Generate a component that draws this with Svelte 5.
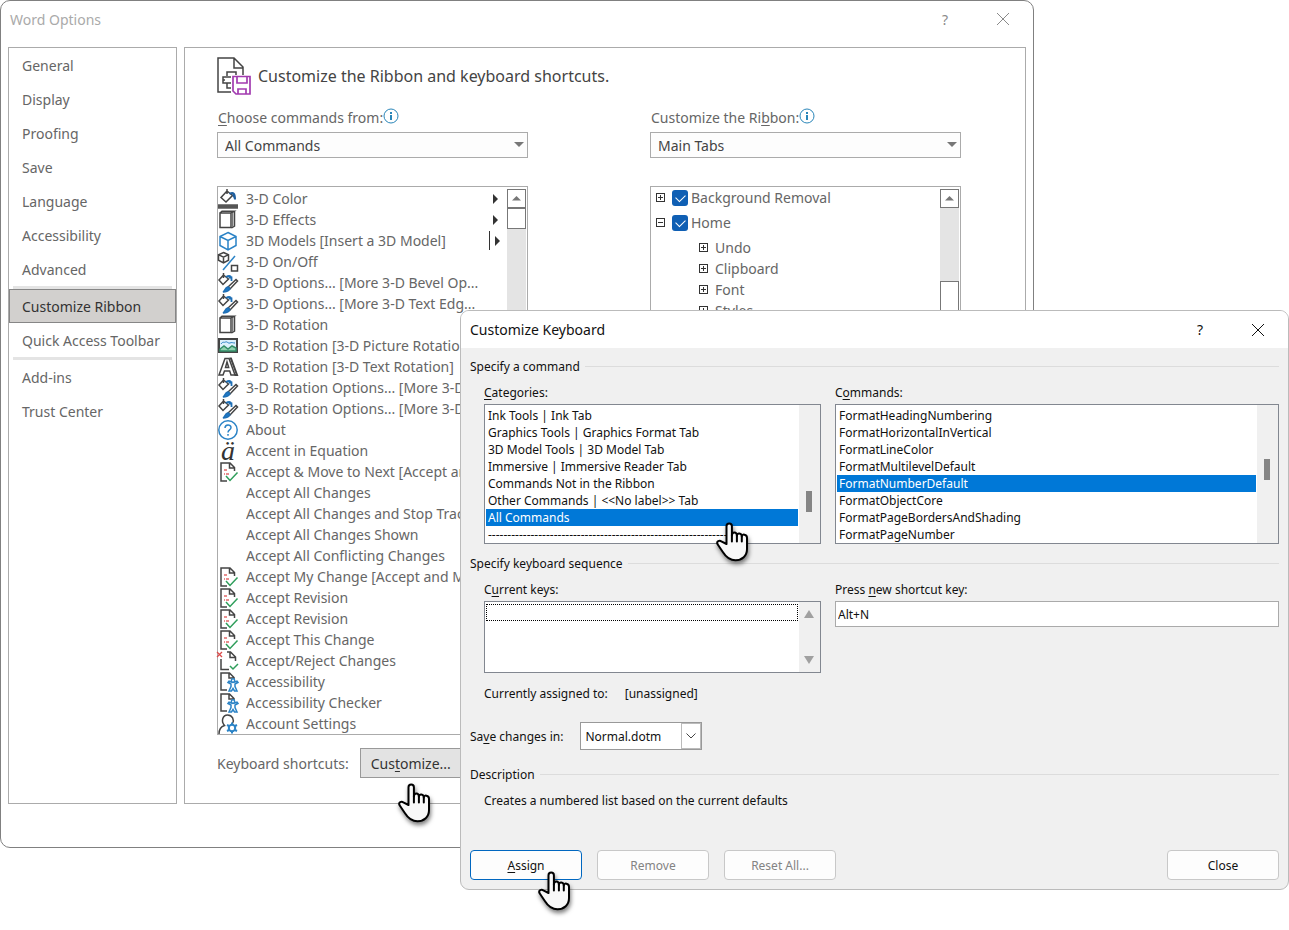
<script lang="ts">
	type Command = { label: string; icon?: string; more?: 'menu' | 'split' };

	const NAV = [
		['General', 'Display', 'Proofing', 'Save', 'Language', 'Accessibility', 'Advanced'],
		['Customize Ribbon', 'Quick Access Toolbar'],
		['Add-ins', 'Trust Center'],
	];

	const COMMANDS: Command[] = [
		{ label: '3-D Color', icon: 'fill', more: 'menu' },
		{ label: '3-D Effects', icon: 'slab', more: 'menu' },
		{ label: '3D Models [Insert a 3D Model]', icon: 'cube', more: 'split' },
		{ label: '3-D On/Off', icon: 'toggle' },
		{ label: '3-D Options... [More 3-D Bevel Op...', icon: 'brush' },
		{ label: '3-D Options... [More 3-D Text Edg...', icon: 'brush' },
		{ label: '3-D Rotation', icon: 'slab' },
		{ label: '3-D Rotation [3-D Picture Rotation]', icon: 'picture' },
		{ label: '3-D Rotation [3-D Text Rotation]', icon: 'letter' },
		{ label: '3-D Rotation Options... [More 3-D...', icon: 'brush' },
		{ label: '3-D Rotation Options... [More 3-D...', icon: 'brush' },
		{ label: 'About', icon: 'help' },
		{ label: 'Accent in Equation', icon: 'accent' },
		{ label: 'Accept & Move to Next [Accept an...', icon: 'accept' },
		{ label: 'Accept All Changes' },
		{ label: 'Accept All Changes and Stop Trac...' },
		{ label: 'Accept All Changes Shown' },
		{ label: 'Accept All Conflicting Changes' },
		{ label: 'Accept My Change [Accept and M...', icon: 'accept' },
		{ label: 'Accept Revision', icon: 'accept' },
		{ label: 'Accept Revision', icon: 'accept' },
		{ label: 'Accept This Change', icon: 'accept' },
		{ label: 'Accept/Reject Changes', icon: 'review' },
		{ label: 'Accessibility', icon: 'access' },
		{ label: 'Accessibility Checker', icon: 'access' },
		{ label: 'Account Settings', icon: 'account' },
	];

	const TABS = [
		{ label: 'Background Removal', open: false, groups: [] },
		{ label: 'Home', open: true, groups: ['Undo', 'Clipboard', 'Font', 'Styles'] },
	];

	const CATEGORIES = [
		'Ink Tools | Ink Tab',
		'Graphics Tools | Graphics Format Tab',
		'3D Model Tools | 3D Model Tab',
		'Immersive | Immersive Reader Tab',
		'Commands Not in the Ribbon',
		'Other Commands | <<No label>> Tab',
		'All Commands',
		'-'.repeat(62),
	];

	const WORD_COMMANDS = [
		'FormatHeadingNumbering',
		'FormatHorizontalInVertical',
		'FormatLineColor',
		'FormatMultilevelDefault',
		'FormatNumberDefault',
		'FormatObjectCore',
		'FormatPageBordersAndShading',
		'FormatPageNumber',
	];

	let page = $state('Customize Ribbon');
	let category = $state('All Commands');
	let command = $state('FormatNumberDefault');
	let shortcut = $state('Alt+N');
</script>

{#snippet pointer()}
	<svg class="pointer" viewBox="0 0 34 40" aria-hidden="true">
		<path
			d="M10.500 22V4.300a2.700 2.700 0 0 1 5.400 0V13.500c0-4 5-3.800 5 .3 0-3.400 4.900-3 4.900.8 0-3 5.200-2.600 5.200 1.200V27c0 7-5 11.200-11.500 11.200-6 0-9.500-3.200-12.500-8L1.600 22.300c-1.500-3.200 1.800-4.400 4.200-2.600z"
			fill="#f8f8f8" stroke="#000" stroke-width="2" stroke-linejoin="round"
		/>
		<path d="M15.900 13v6.500M20.900 13.500v6M25.800 14.500v5" stroke="#000" stroke-width="2" stroke-linecap="round" />
	</svg>
{/snippet}

{#snippet info()}
	<svg class="info" viewBox="0 0 16 16" fill="none" stroke="#2a86b9" aria-hidden="true">
		<circle cx="8" cy="8" r="7" />
		<path d="M8 4v2M8 7v5" stroke-width="2" />
	</svg>
{/snippet}

{#snippet icon(kind: string)}
	<svg class="icon" viewBox="0 0 20 20" fill="none" stroke="#444" stroke-width="1.500" aria-hidden="true">
		{#if kind === 'fill'}
			<path d="M9 0v5M9 2l5.500 4.500L8 13 3 8.500z" />
			<path d="M11.500 5c4-2.500 5.500 0 5.500 5.500M15 5l2 5" stroke="#1f5f9f" stroke-width="2" />
			<path d="M0 17.500h20" stroke="#555" stroke-width="4.500" />
		{:else if kind === 'slab'}
			<path d="M2 3h11v14.500H2zM2 3l2-1.800h12L13 3M16.500 1.500v14.500l-3 2" />
			<path d="M14.500 3v14" stroke="#777" stroke-width="1.500" />
		{:else if kind === 'cube'}
			<path d="M10 1.500l8 4v9l-8 4.500-8-4.500v-9zM2 5.500l8 4 8-4M10 9.500V19" stroke="#2b83c6" />
		{:else if kind === 'toggle'}
			<path d="M5.500.500l5 2.200v5.500l-5 2.600-5-2.600V2.700zM.500 2.700l5 2.500 5-2.500M5.500 5v5.500" />
			<path d="M17 4L5 18" stroke="#2b83c6" />
			<path d="M13.500 13.500h6v5.500h-6z" />
		{:else if kind === 'brush'}
			<path d="M5.500 0v5M5.500 2l5 4L5 11.500 1 7z" />
			<path d="M8 4c3-2 5.500-1.500 5.500 2.500M10.500 4.500h3V8" stroke="#1f6fb5" stroke-width="1.800" />
			<path d="M10 14l8-7.500 1.500 1.500L12 16z" fill="#fff" />
			<path d="M5 19c2-1 2-5 5-5 3.500 1 1.500 5-5 5z" fill="#1f78c4" stroke="#1f6fb5" />
		{:else if kind === 'picture'}
			<path d="M1 3h18v13H1z" fill="#dcf0fb" stroke-width="2" />
			<path d="M2 15v-2l4-3 4 3 4-3 4 2v3z" fill="#8fd0b0" stroke="#338d68" />
			<path d="M3 8c2-3 3-1 4.500-2s3 2 4.500 1 3 0 5 0" stroke="#2b83c6" stroke-width="1" />
		{:else if kind === 'letter'}
			<path d="M1 18L7 1.500h4L17 18h-4l-1.300-4H6.500L5 18zM7.500 10.500h3.200L9 5z" fill="#fff" />
			<path d="M11.500 1.500h1.500L19 18h-2.500" stroke-width="2" />
		{:else if kind === 'help'}
			<circle cx="10" cy="10" r="9.200" stroke="#2b83c6" />
			<path d="M7 8c0-4 6-4 6-.500 0 2.500-3 2.300-3 5M10 14v1.800" stroke="#2b83c6" stroke-width="1.500" />
		{:else if kind === 'accept'}
			<path d="M16.500 9V5.500L12 1H3v18h6M11.500 1v5h5" />
			<path d="M6 8h3M8 12h3M6 12h1" stroke="#e26a6a" stroke-width="1.500" />
			<path d="M8 14l4 4.500 7.500-8" stroke="#2f9e5b" stroke-width="1.500" />
		{:else if kind === 'review'}
			<path d="M17.500 10V6l-5-5H9M3 8v10.500h8M12 1v5.500h5.500" />
			<path d="M-1 1l5 5M4 1l-5 5" stroke="#dc4b4b" stroke-width="1.300" />
			<path d="M12 15l3 3 5-5" stroke="#2f9e5b" stroke-width="1.500" />
		{:else if kind === 'access'}
			<path d="M16 7V5.500L11.500 1H3v17h6M11 1v5h5" />
			<g stroke="#2b83c6" fill="#fff">
				<path d="M10 10.500l3 1.500v2.500L11 19h2.500l1.500-2.500 1.500 2.500H19l-2-4.500V12l3-1.500-1-1.300-4 1.300-4-1.300z" />
				<circle cx="15" cy="8.500" r="1.700" />
			</g>
		{:else if kind === 'account'}
			<path d="M1 20c0-5 2-7.500 5.500-8.500C2.500 7 5 1 9.500 1c5 0 7 5 5 8.500" />
			<circle cx="14" cy="14" r="3.200" stroke="#2b83c6" stroke-width="2" />
			<path d="M14 8.500v2M14 17.500v2M9 11l2 1M17 16l2 1M9 17l2-1M17 12l2-1" stroke="#2b83c6" stroke-width="2" />
		{/if}
	</svg>
{/snippet}

{#snippet expander(open: boolean)}
	<button class="expander" aria-label={open ? 'Collapse' : 'Expand'}>
		<svg viewBox="0 0 9 9" fill="none" stroke="#333" shape-rendering="crispEdges">
			<path d={open ? 'M.5.5h8v8h-8zM2 4.5h5' : 'M.5.5h8v8h-8zM2 4.5h5M4.5 2v5'} />
		</svg>
	</button>
{/snippet}

<main class="desktop">
	<section class="options" aria-label="Word Options">
		<header class="options-title">
			<span class="name">Word Options</span>
			<button aria-label="Help">?</button>
			<button aria-label="Close">
				<svg viewBox="0 0 12 12" stroke="currentColor"><path d="M0 0l12 12M12 0L0 12" /></svg>
			</button>
		</header>

		<div class="options-body">
			<nav>
				{#each NAV as group}
					<div class="nav-group">
						{#each group as item}
							<button class:active={page === item} onclick={() => (page = item)}>{item}</button>
						{/each}
					</div>
				{/each}
			</nav>

			<div class="panel">
				<h1>
					<svg viewBox="0 0 34 38" fill="none" stroke="#444" stroke-width="1.500" aria-hidden="true">
						<path d="M14 35H1V1h16l9 9v8M17 1v10h9" />
						<path d="M10 19v-4h9v3M14 20H6v6h8M10 26v5h4M6 23h2" />
						<path d="M16 19.500h17v17.500H19l-3-3zM20 20v6h10v-6M21 37v-5h8v5" stroke="#a23bb0" stroke-width="1.700" fill="#fff" />
					</svg>
					Customize the Ribbon and keyboard shortcuts.
				</h1>

				<div class="columns">
					<div class="column">
						<label for="source"><span><u>C</u>hoose commands from:</span>{@render info()}</label>
						<div class="dropdown">
							<select id="source"><option>All Commands</option></select>
							<svg viewBox="0 0 10 5" aria-hidden="true"><path d="M0 0h10L5 5z" /></svg>
						</div>
						<div class="box">
							<ul class="commands">
								{#each COMMANDS as item}
									<li>
										<span class="slot">
											{#if item.icon === 'accent'}
												<i class="accent">ä</i>
											{:else if item.icon}
												{@render icon(item.icon)}
											{/if}
										</span>
										<span class="text">{item.label}</span>
										{#if item.more}
											<span class="more" class:split={item.more === 'split'}></span>
										{/if}
									</li>
								{/each}
							</ul>
							<div class="scrollbar">
								<button aria-label="Scroll up"><svg viewBox="0 0 10 5"><path d="M0 5h10L5 0z" /></svg></button>
								<div class="thumb"></div>
							</div>
						</div>
					</div>

					<div class="column">
						<label for="tabs"><span>Customize the Ri<u>b</u>bon:</span>{@render info()}</label>
						<div class="dropdown">
							<select id="tabs"><option>Main Tabs</option></select>
							<svg viewBox="0 0 10 5" aria-hidden="true"><path d="M0 0h10L5 5z" /></svg>
						</div>
						<div class="box">
							<ul class="tree">
								{#each TABS as tab}
									<li>
										<div class="tab">
											{@render expander(tab.open)}
											<label><input type="checkbox" checked />{tab.label}</label>
										</div>
										{#if tab.open}
											<ul>
												{#each tab.groups as group}
													<li class="group">{@render expander(false)}{group}</li>
												{/each}
											</ul>
										{/if}
									</li>
								{/each}
							</ul>
							<div class="scrollbar lower">
								<button aria-label="Scroll up"><svg viewBox="0 0 10 5"><path d="M0 5h10L5 0z" /></svg></button>
								<div class="thumb"></div>
							</div>
						</div>
					</div>
				</div>

				<div class="shortcuts">
					<span>Keyboard shortcuts:</span>
					<button>Cus<u>t</u>omize...{@render pointer()}</button>
				</div>
			</div>
		</div>
	</section>

	<section class="keyboard" role="dialog" aria-label="Customize Keyboard">
		<header class="keyboard-title">
			<span class="name">Customize Keyboard</span>
			<button aria-label="Help">?</button>
			<button aria-label="Close">
				<svg viewBox="0 0 12 12" stroke="currentColor"><path d="M0 0l12 12M12 0L0 12" /></svg>
			</button>
		</header>

		<div class="keyboard-body">
			<h2>Specify a command</h2>
			<div class="fields">
				<div class="field">
					<span class="caption" id="categories"><u>C</u>ategories:</span>
					<div class="listbox">
						<ul role="listbox" aria-labelledby="categories" tabindex="0">
							{#each CATEGORIES as item}
								<li role="option" aria-selected={category === item}>{item}</li>
							{/each}
						</ul>
						<div class="rail low"><div></div></div>
						<div class="over-list">{@render pointer()}</div>
					</div>
				</div>
				<div class="field">
					<span class="caption" id="commands">C<u>o</u>mmands:</span>
					<div class="listbox">
						<ul role="listbox" aria-labelledby="commands" tabindex="0">
							{#each WORD_COMMANDS as item}
								<li role="option" aria-selected={command === item}>{item}</li>
							{/each}
						</ul>
						<div class="rail"><div></div></div>
					</div>
				</div>
			</div>

			<h2>Specify keyboard sequence</h2>
			<div class="fields">
				<div class="field">
					<span class="caption" id="current">C<u>u</u>rrent keys:</span>
					<div class="listbox">
						<ul class="empty" role="listbox" aria-labelledby="current" tabindex="0">
							<li class="focus" role="option" aria-selected="false" aria-label="None"></li>
						</ul>
						<div class="rail arrows">
							<svg viewBox="0 0 10 8"><path d="M0 8h10L5 0z" /></svg>
							<svg viewBox="0 0 10 8"><path d="M0 0h10L5 8z" /></svg>
						</div>
					</div>
				</div>
				<div class="field">
					<label class="caption" for="shortcut">Press <u>n</u>ew shortcut key:</label>
					<input id="shortcut" type="text" bind:value={shortcut} />
				</div>
			</div>

			<p class="assigned"><span>Currently assigned to:</span><span>[unassigned]</span></p>

			<div class="save">
				<label for="save">Sa<u>v</u>e changes in:</label>
				<div class="combo">
					<select id="save"><option>Normal.dotm</option></select>
					<span class="drop">
						<svg viewBox="0 0 10 6" fill="none" stroke="#444" aria-hidden="true"><path d="M.5.5L5 5 9.500.500" /></svg>
					</span>
				</div>
			</div>

			<h2>Description</h2>
			<p class="description">Creates a numbered list based on the current defaults</p>

			<footer>
				<button class="primary"><span><u>A</u>ssign</span>{@render pointer()}</button>
				<button disabled>Remove</button>
				<button disabled>Reset All...</button>
				<button class="close">Close</button>
			</footer>
		</div>
	</section>
</main>

<style>
	:global(body) {
		background: #fff;
	}

	.desktop {
		display: grid;
		min-height: 100vh;
		align-items: start;
		box-sizing: border-box;
		font-family: 'Noto Sans', 'Open Sans', sans-serif;
		font-size: 14px;
		color: #666;
	}

	.desktop :global(*) {
		box-sizing: border-box;
	}

	button,
	input,
	select {
		font: inherit;
		color: inherit;
		margin: 0;
	}

	button {
		padding: 0;
		border: none;
		background: none;
	}

	ul {
		list-style: none;
		margin: 0;
		padding: 0;
	}

	u {
		text-underline-offset: 2px;
	}

	/* the two windows share one grid cell, the dialog lies on top */
	.options,
	.keyboard {
		grid-area: 1 / 1;
	}

	.options {
		margin-right: 255px;
		padding: 0 7px 43px;
		border: 1px solid #808080;
		border-radius: 10px;
		background: #fff;
	}

	.options-title,
	.keyboard-title {
		display: flex;
		align-items: center;
	}

	.options-title {
		height: 46px;
		padding: 0 0 10px 2px;
		color: #8a8a8a;
	}

	.options-title .name {
		color: #aaa;
	}

	.name {
		flex: 1;
	}

	.options-title button,
	.keyboard-title button {
		display: grid;
		place-items: center;
		width: 58px;
	}

	.options-title svg,
	.keyboard-title svg {
		width: 12px;
		height: 12px;
	}

	.options-title button:last-child {
		margin-right: -6px;
	}

	.options-body {
		display: grid;
		grid-template-columns: 169px 1fr;
		gap: 7px;
	}

	nav,
	.panel {
		border: 1px solid #ababab;
	}

	.nav-group + .nav-group::before {
		content: '';
		display: block;
		height: 3px;
		margin: 0 4px;
		background: #e4e4e4;
	}

	nav button {
		display: block;
		width: 100%;
		height: 34px;
		padding: 0 12px;
		border: 1px solid transparent;
		text-align: left;
		white-space: nowrap;
	}

	nav button.active {
		border-color: #868686;
		background: #d2d0ce;
		color: #333;
	}

	.panel {
		padding: 9px 64px 25px 32px;
	}

	h1 {
		display: flex;
		align-items: center;
		gap: 7px;
		height: 38px;
		margin: 0;
		font-size: 16px;
		font-weight: 400;
		color: #444;
		white-space: nowrap;
	}

	h1 svg {
		width: 34px;
		height: 38px;
	}

	.columns {
		display: grid;
		grid-template-columns: 1fr 1fr;
		gap: 122px;
		margin-top: 13px;
	}

	.column {
		display: flex;
		flex-direction: column;
		min-width: 0;
	}

	.column > label {
		display: flex;
		height: 24px;
		padding-left: 1px;
		line-height: 20px;
		white-space: nowrap;
	}

	.info {
		width: 16px;
		height: 16px;
	}

	.dropdown {
		position: relative;
		margin-bottom: 28px;
	}

	.dropdown select {
		display: block;
		width: 100%;
		height: 26px;
		padding: 0 7px;
		border: 1px solid #ababab;
		border-radius: 0;
		background: #fdfdfd;
		color: #444;
		appearance: none;
	}

	.dropdown svg {
		position: absolute;
		top: 10px;
		right: 4px;
		width: 10px;
		fill: #777;
	}

	.box {
		display: flex;
		flex: 1;
		border: 1px solid #ababab;
	}

	.commands,
	.tree {
		flex: 1;
		min-width: 0;
	}

	.commands {
		padding-top: 1px;
	}

	.commands li {
		display: flex;
		align-items: center;
		height: 21px;
		padding-right: 9px;
	}

	.slot {
		display: grid;
		place-items: center;
		width: 20px;
		height: 21px;
		margin-right: 8px;
	}

	.icon {
		width: 20px;
		height: 20px;
		overflow: visible;
	}

	.accent {
		font: italic 28px/21px 'Liberation Serif', serif;
		color: #333;
	}

	.text {
		flex: 1;
		min-width: 0;
		overflow: hidden;
		white-space: nowrap;
		line-height: 21px;
	}

	.more::before {
		content: '';
		display: block;
		border: 5px solid transparent;
		border-left-color: #333;
		border-right: none;
	}

	.more.split {
		display: grid;
		align-items: center;
		height: 19px;
		margin-right: -2px;
		padding-left: 5px;
		border-left: 1px solid #333;
	}

	.scrollbar {
		width: 19px;
		margin: 2px 1px 0 0;
		background: #e4e4e4;
	}

	.scrollbar button {
		display: grid;
		place-items: center;
		width: 100%;
		height: 19px;
		border: 1px solid #777;
		background: #fff;
	}

	.scrollbar svg {
		width: 9px;
		fill: #777;
	}

	.thumb {
		height: 21px;
		border: 1px solid #777;
		background: #fff;
	}

	.lower .thumb {
		height: 170px;
		margin-top: 73px;
	}

	.tab {
		display: flex;
		align-items: center;
		height: 21px;
		padding-left: 5px;
	}

	li + li > .tab {
		margin: 4px 0;
	}

	.tab label {
		display: flex;
		align-items: center;
		gap: 3px;
		margin-left: 7px;
	}

	.tab input {
		display: grid;
		place-items: center;
		width: 16px;
		height: 16px;
		border-radius: 3px;
		background: #0f5fb4;
		appearance: none;
	}

	.tab input:checked::before {
		content: '';
		width: 8px;
		height: 5px;
		margin-bottom: 2px;
		border: solid #fff;
		border-width: 0 0 1px 1px;
		transform: rotate(-45deg);
	}

	.expander {
		display: flex;
		width: 9px;
		height: 9px;
	}

	.expander svg {
		width: 9px;
		height: 9px;
	}

	.group {
		display: flex;
		align-items: center;
		gap: 7px;
		height: 21px;
		padding-left: 48px;
	}

	.shortcuts {
		display: flex;
		align-items: center;
		gap: 11px;
		margin-top: 13px;
		white-space: nowrap;
	}

	.shortcuts button {
		position: relative;
		height: 30px;
		padding: 0 10px;
		border: 1px solid #999;
		background: #e3e3e3;
		color: #333;
	}

	.pointer {
		position: absolute;
		z-index: 1;
		width: 34px;
		height: 40px;
		filter: drop-shadow(1px 3px 2px rgb(0 0 0 / 50%));
		pointer-events: none;
	}

	.shortcuts .pointer {
		top: 34px;
		left: 37px;
	}

	.keyboard {
		z-index: 1;
		margin: 310px 0 0 460px;
		border: 1px solid #bbb;
		border-radius: 9px;
		background: #f0f0f0;
		color: #111;
		font-size: 12px;
	}

	.keyboard-title {
		height: 37px;
		padding: 0 1px 0 9px;
		border-radius: 8px 8px 0 0;
		background: #fff;
		font-size: 14px;
	}

	.keyboard-body {
		padding: 8px 9px 9px;
	}

	h2 {
		display: flex;
		align-items: center;
		gap: 5px;
		height: 20px;
		margin: 0;
		font-size: 12px;
		font-weight: 400;
	}

	h2::after {
		content: '';
		flex: 1;
		height: 1px;
		background: #dcdcdc;
	}

	.fields {
		display: grid;
		grid-template-columns: 337fr 444fr;
		gap: 14px;
		padding-left: 14px;
	}

	.fields + h2 {
		margin-top: 9px;
	}

	.field {
		min-width: 0;
	}

	.caption {
		display: block;
		height: 28px;
		line-height: 33px;
	}

	.listbox {
		position: relative;
		display: flex;
		border: 1px solid #828790;
		background: #fff;
	}

	.listbox ul {
		flex: 1;
		min-width: 0;
		padding: 2px 1px 0;
		outline: none;
	}

	.listbox li {
		height: 17px;
		padding: 0 2px;
		overflow: hidden;
		line-height: 17px;
		white-space: nowrap;
	}

	.listbox li[aria-selected='true'] {
		background: #0078d7;
		color: #fff;
	}

	.listbox .empty {
		height: 70px;
	}

	.listbox .focus {
		border: 1px dotted #000;
	}

	.over-list {
		position: absolute;
		right: 104px;
		bottom: 21px;
	}

	.rail {
		width: 21px;
		padding: 54px 8px 0 7px;
		background: #f0f0f0;
	}

	.rail.low {
		padding-top: 86px;
	}

	.rail div {
		width: 6px;
		height: 21px;
		background: #858585;
	}

	.rail.arrows {
		display: flex;
		flex-direction: column;
		justify-content: space-between;
		padding: 8px 6px 8px 5px;
	}

	.arrows svg {
		width: 10px;
		height: 8px;
		fill: #a0a0a0;
	}

	.field input {
		display: block;
		width: 100%;
		height: 26px;
		padding: 0 2px;
		border: 1px solid #aaa;
		border-radius: 0;
		background: #fff;
	}

	p {
		margin: 0;
		padding-left: 14px;
		line-height: 20px;
	}

	.assigned {
		display: flex;
		gap: 17px;
		margin-top: 11px;
	}

	.save {
		display: flex;
		align-items: center;
		gap: 17px;
		margin: 18px 0 14px;
	}

	.combo {
		position: relative;
		display: flex;
		width: 122px;
	}

	.combo select {
		width: 100%;
		height: 28px;
		padding: 0 4px;
		border: 1px solid #999;
		border-radius: 0;
		background: #fff;
		appearance: none;
	}

	.drop {
		position: absolute;
		top: 1px;
		right: 1px;
		display: grid;
		place-items: center;
		width: 20px;
		height: 26px;
		border: 1px solid #bbb;
		pointer-events: none;
	}

	.drop svg {
		width: 10px;
		height: 6px;
	}

	.description {
		margin-top: 7px;
	}

	footer {
		display: flex;
		gap: 15px;
		margin-top: 39px;
	}

	footer button {
		position: relative;
		width: 112px;
		height: 30px;
		border: 1px solid #c8c8c8;
		border-radius: 4px;
		background: #fdfdfd;
	}

	footer button:disabled {
		color: #838383;
	}

	footer .primary {
		border-color: #0067c0;
	}

	footer .close {
		margin-left: auto;
	}

	footer .pointer {
		top: 20px;
		left: 67px;
	}

	.over-list .pointer {
		top: 0;
		left: 0;
	}
</style>
